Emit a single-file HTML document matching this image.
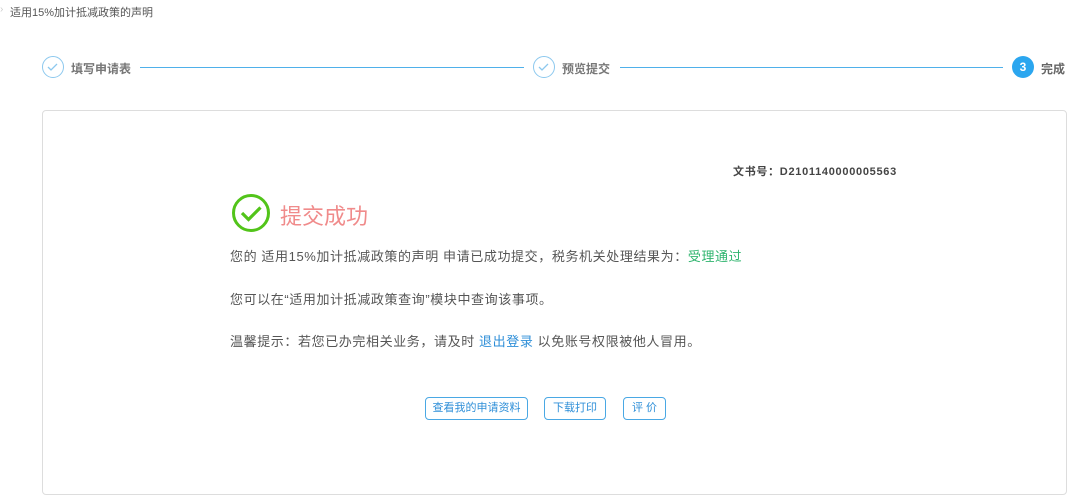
<!DOCTYPE html>
<html><head><meta charset="utf-8"><style>
*{margin:0;padding:0;box-sizing:border-box}
body{width:1080px;height:496px;background:#fff;font-family:"Liberation Sans","Noto Sans CJK SC",sans-serif;color:#555;position:relative;overflow:hidden}
.a{position:absolute;white-space:nowrap}
.circ{position:absolute;width:22px;height:22px;border-radius:50%;border:1.5px solid #8cc8ee}
.line{position:absolute;height:1px;background:#4fb0ea;top:67px}
.btn{position:absolute;top:397px;height:23px;border:1px solid #4aa8e4;border-radius:4px;color:#2f8fd8;font-size:11px;text-align:center;line-height:21px}
.t{letter-spacing:0.6px}
</style></head><body>
<div class="a" style="left:0;top:4px;font-size:10px;color:#ccc">›</div>
<div class="a" style="left:10px;top:4px;font-size:11px;color:#555">适用15%加计抵减政策的声明</div>

<div class="circ" style="left:42px;top:56px"><svg width="19" height="19" viewBox="0 0 19 19" style="position:absolute;left:0;top:0"><path d="M5 10l3 3 6-6" stroke="#8cc8ee" stroke-width="1.3" fill="none"/></svg></div>
<div class="a" style="left:71px;top:60px;font-size:12px;color:#777;font-weight:bold">填写申请表</div>
<div class="line" style="left:140px;width:384px"></div>
<div class="circ" style="left:533px;top:56px"><svg width="19" height="19" viewBox="0 0 19 19" style="position:absolute;left:0;top:0"><path d="M5 10l3 3 6-6" stroke="#8cc8ee" stroke-width="1.3" fill="none"/></svg></div>
<div class="a" style="left:562px;top:60px;font-size:12px;color:#777;font-weight:bold">预览提交</div>
<div class="line" style="left:620px;width:383px"></div>
<div class="a" style="left:1012px;top:56px;width:22px;height:22px;border-radius:50%;background:#2ba6ef;color:#fff;font-size:12px;text-align:center;line-height:22px;font-weight:bold">3</div>
<div class="a" style="left:1041px;top:60px;font-size:12px;color:#666;font-weight:bold">完成</div>

<div class="a" style="left:42px;top:110px;width:1025px;height:385px;border:1px solid #ddd;border-radius:4px"></div>
<div class="a" style="left:733px;top:163px;font-size:11px;color:#444;font-weight:bold;letter-spacing:0.7px">文书号：D2101140000005563</div>
<svg class="a" style="left:231px;top:193px" width="40" height="40" viewBox="0 0 40 40"><circle cx="20" cy="20" r="17.5" stroke="#52c41a" stroke-width="3" fill="none"/><path d="M11 20l6.5 6.5 12-12" stroke="#52c41a" stroke-width="3.2" fill="none"/></svg>
<div class="a" style="left:280px;top:199px;font-size:22px;color:#f08b8b">提交成功</div>
<div class="a t" style="left:230px;top:246px;font-size:13px;color:#555">您的 适用15%加计抵减政策的声明 申请已成功提交，税务机关处理结果为：<span style="color:#2fb46e">受理通过</span></div>
<div class="a t" style="left:230px;top:289px;font-size:13px;color:#555">您可以在“适用加计抵减政策查询”模块中查询该事项。</div>
<div class="a t" style="left:230px;top:331px;font-size:13px;color:#555">温馨提示：若您已办完相关业务，请及时 <span style="color:#2f8fd8">退出登录</span> 以免账号权限被他人冒用。</div>
<div class="btn" style="left:425px;width:103px">查看我的申请资料</div>
<div class="btn" style="left:544px;width:62px">下载打印</div>
<div class="btn" style="left:623px;width:43px">评 价</div>
</body></html>
